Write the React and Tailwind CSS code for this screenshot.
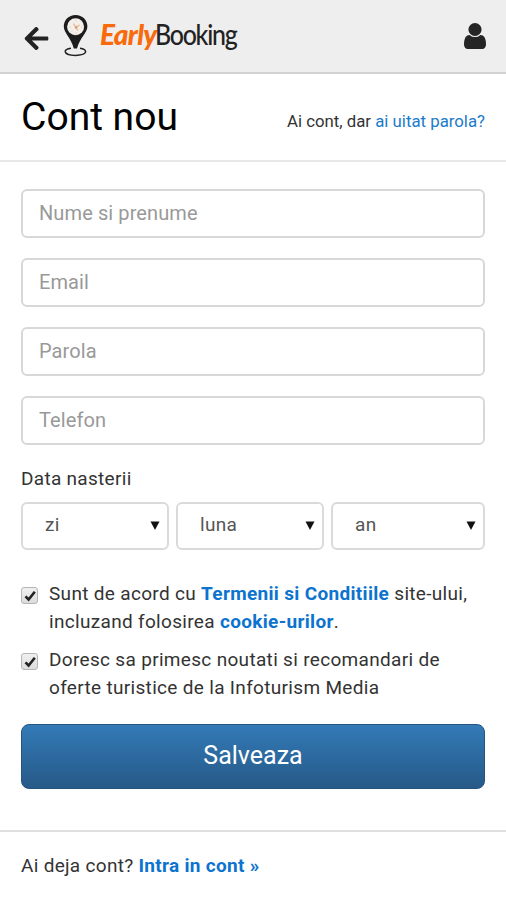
import React from 'react';
import { FaArrowLeft } from 'react-icons/fa';

const fields = [
  { name: 'name', type: 'text', label: 'Nume si prenume' },
  { name: 'email', type: 'email', label: 'Email' },
  { name: 'password', type: 'password', label: 'Parola' },
  { name: 'phone', type: 'tel', label: 'Telefon' },
];

const PinLogo = () => (
  <svg width="26" height="44" viewBox="0 0 26 44" fill="none">
    <path d="M8 34.300C4.500 34.800 2.200 36 2.200 37.600C2.200 40 7 41.400 12.500 41.400C18 41.400 22.600 40 22.600 37.600C22.600 36 20.300 34.800 17 34.300" stroke="#222" strokeWidth="1.500" />
    <path d="M12.600 1C5.800 1 .8 6 .8 12.500C.8 19 7.800 23 10.800 34.500H14C17 23 24.400 19 24.400 12.500C24.400 6 19.400 1 12.600 1Z" fill="#1c1c1c" />
    <circle cx="12.600" cy="12.800" r="8.500" fill="#f3efeb" />
    <path d="M10.500 9.500L13 13.500L16.500 11M13 13.500L15 16.500" stroke="#e8b58c" strokeWidth="1.300" />
    <path d="M13 6V7.500M13 18.500V20M6.500 13H8M18 13H19.500M8.500 17.500L9.500 16.500" stroke="#e9cdb8" />
    <circle cx="13" cy="13.500" r="1.200" fill="#d99a70" />
  </svg>
);

const UserIcon = () => (
  <svg width="22" height="26" viewBox="0 0 1280 1536" preserveAspectRatio="none" fill="#252525">
    <path d="M1280 1271q0 109-62.500 187t-150.500 78h-854q-88 0-150.500-78t-62.500-187q0-85 8.500-160.500t31.500-152 58.500-131 94-89 134.500-34.500q131 128 313 128t313-128q76 0 134.500 34.500t94 89 58.500 131 31.500 152 8.500 160.500zM1024 384q0 159-112.500 271.500t-271.500 112.500-271.500-112.500-112.500-271.500 112.500-271.500 271.500-112.500 271.500 112.500 112.500 271.500z" />
  </svg>
);

const Select = ({ label, className }) => (
  <div className={`relative h-12 ${className}`}>
    <select
      aria-label={label}
      className="h-full w-full appearance-none rounded-md border-2 border-[#dadada] bg-white pb-px pl-[22px] text-[19px] tracking-[0.3px] text-[#555]"
    >
      <option>{label}</option>
    </select>
    <svg className="pointer-events-none absolute right-[9px] top-[19px]" width="10" height="9" viewBox="0 0 10 9">
      <path d="M.5 .5H9.500L5 9Z" fill="#111" />
    </svg>
  </div>
);

const Checkbox = () => (
  <span className="mt-[7px] flex h-[17px] w-[17px] shrink-0 items-center justify-center rounded-[3px] border border-[#b5b5b5] bg-gradient-to-b from-[#f0f0f0] to-[#dcdcdc]">
    <svg width="12" height="12" viewBox="0 0 12 12" fill="none">
      <path d="M1.500 6.300L4.600 9.500L10.800 1.800" stroke="#222" strokeWidth="2.600" />
    </svg>
  </span>
);

const App = () => (
  <div className="flex h-[900px] w-[506px] flex-col bg-white font-['Roboto',sans-serif] text-[#333]">
    <header className="flex h-[74px] shrink-0 items-start border-b-2 border-[#d2d2d2] bg-[#eeeeee] pl-6 pr-5">
      <FaArrowLeft className="mt-[25px] h-[27px] w-[25px] text-[#222]" />
      <div className="ml-[14px] mt-[14px]">
        <PinLogo />
      </div>
      <div className="ml-[11px] mt-[14px] flex whitespace-nowrap font-['Lato',sans-serif] text-[28px] leading-10">
        <span className="w-[55px] font-black italic tracking-[-0.7px] text-[#f96a0a]">Early</span>
        <span className="w-[80px] origin-left scale-x-[0.89] font-medium tracking-[-1.4px] text-[#222]">Booking</span>
      </div>
      <div className="ml-auto mt-[23px]">
        <UserIcon />
      </div>
    </header>

    <div className="flex h-[88px] shrink-0 items-center justify-between border-b-2 border-[#e8e8e8] px-[21px]">
      <h1 className="mt-px text-[39px] leading-none text-black">Cont nou</h1>
      <p className="mt-[9px] text-[16.800px]">
        Ai cont, dar <a className="text-[#1a7bc9]">ai uitat parola?</a>
      </p>
    </div>

    <form className="flex flex-col px-[21px] pt-[27px]">
      <div className="flex flex-col gap-5">
        {fields.map((field) => (
          <input
            key={field.name}
            type={field.type}
            placeholder={field.label}
            className="h-[49px] rounded-md border-2 border-[#d8d8d8] px-4 pb-[2px] text-[20px] tracking-[0.1px] placeholder:text-[#999]"
          />
        ))}
      </div>

      <label className="mt-5 text-[19px] leading-7 tracking-[0.3px]">Data nasterii</label>
      <div className="mt-[9px] flex gap-[7px]">
        <Select label="zi" className="w-[148px]" />
        <Select label="luna" className="w-[148px]" />
        <Select label="an" className="flex-1" />
      </div>

      <div className="mt-[30px] flex gap-[11px] whitespace-nowrap text-[19px] leading-7 tracking-[0.32px]">
        <Checkbox />
        <p>
          Sunt de acord cu <a className="font-bold text-[#0c73cf]">Termenii si Conditiile</a> site-ului,
          <br />
          incluzand folosirea <a className="font-bold text-[#0c73cf]">cookie-urilor</a>.
        </p>
      </div>
      <div className="mt-[10px] flex gap-[11px] whitespace-nowrap text-[19px] leading-7 tracking-[0.32px]">
        <Checkbox />
        <p>
          Doresc sa primesc noutati si recomandari de
          <br />
          oferte turistice de la Infoturism Media
        </p>
      </div>

      <button
        type="button"
        className="mt-[22px] h-[65px] rounded-lg border border-[#245580] bg-gradient-to-b from-[#337ab7] to-[#265a88] pb-[2px] text-[25px] text-white"
      >
        Salveaza
      </button>
    </form>

    <footer className="mt-[41px] border-t-2 border-[#dfdfdf] px-[21px] pt-5 text-[19px] leading-7 tracking-[0.3px]">
      Ai deja cont? <a className="font-bold text-[#0c73cf]">Intra in cont »</a>
    </footer>
  </div>
);

export default App;
